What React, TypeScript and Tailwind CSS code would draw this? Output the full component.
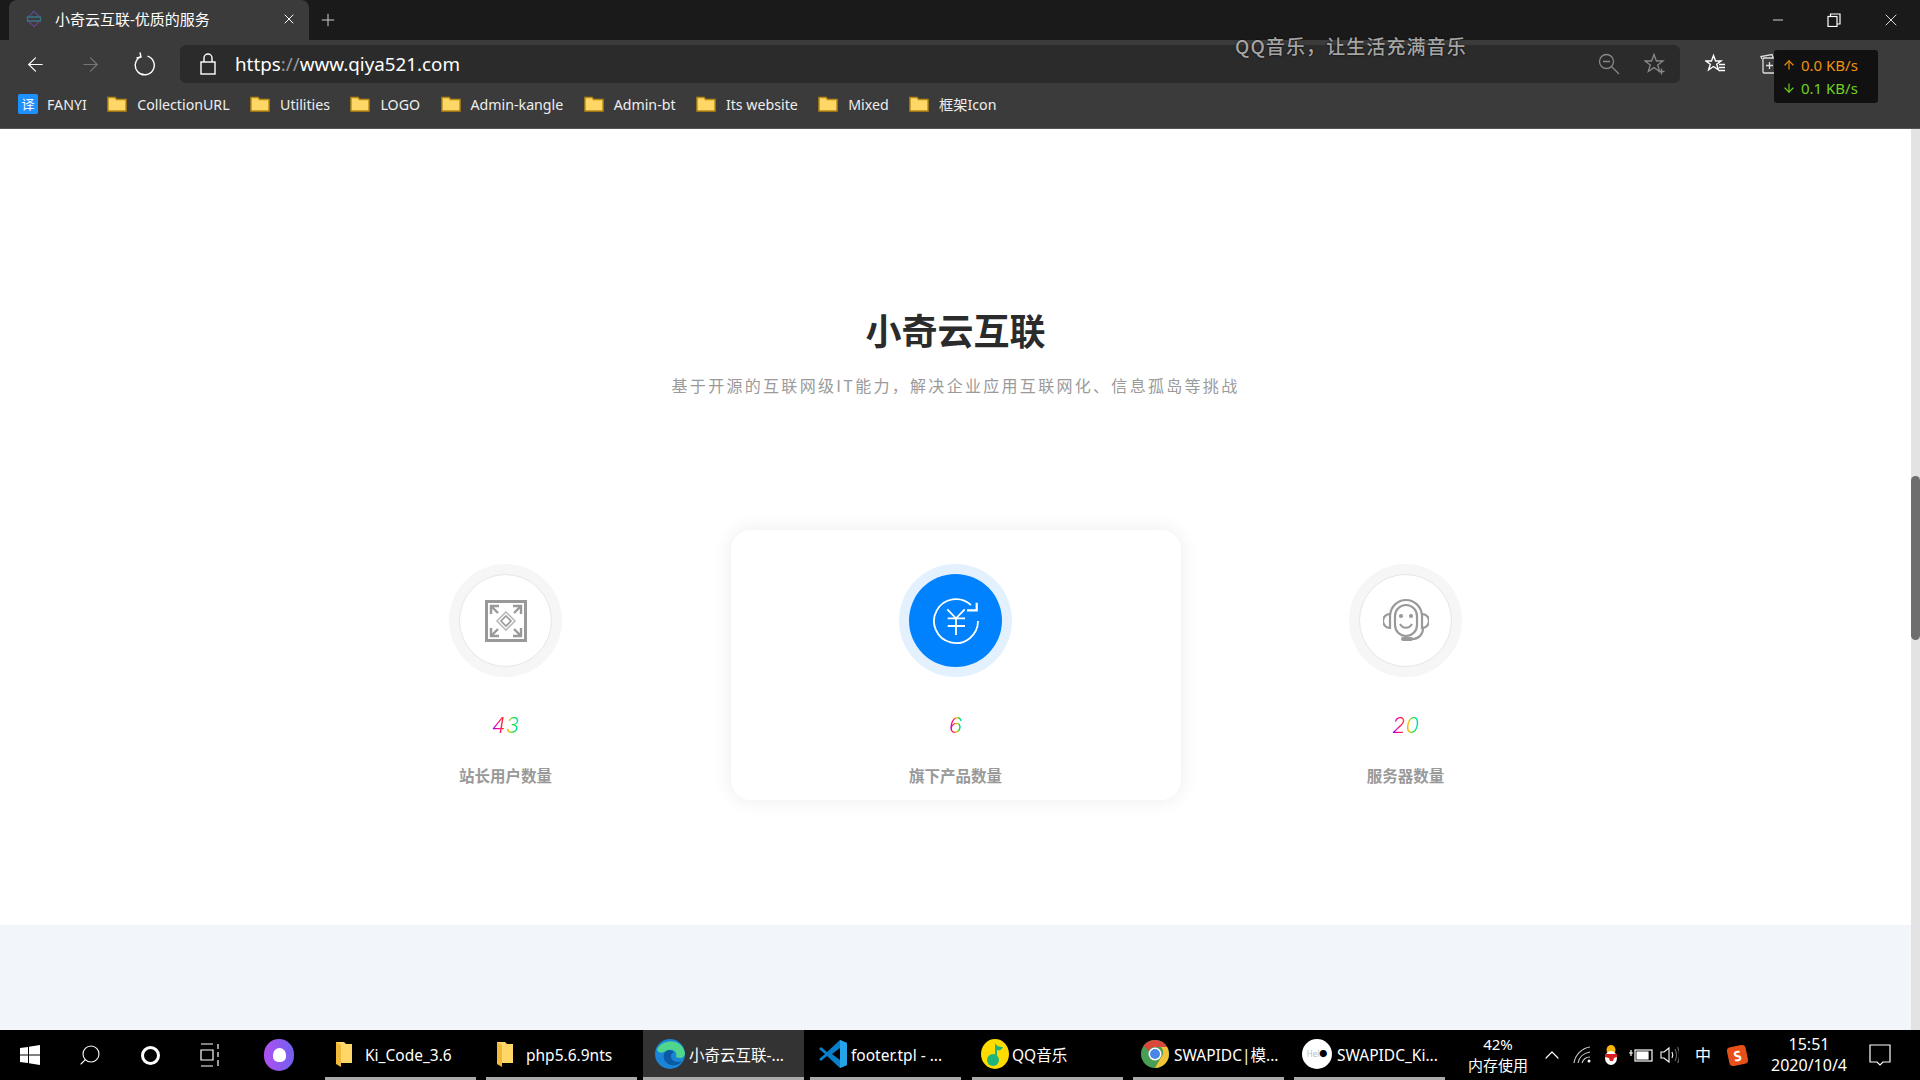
import { ArrowLeft, ArrowRight, X, Plus, Minus, ChevronUp, Search, MoreHorizontal, ArrowUp, ArrowDown } from "lucide-react";

const sans = "font-['Noto_Sans','Noto_Sans_CJK_SC',sans-serif]";

const bookmarks = ["CollectionURL", "Utilities", "LOGO", "Admin-kangle", "Admin-bt", "Its website", "Mixed", "框架Icon"];

function Folder() {
  return (
    <svg width="20" height="16" viewBox="0 0 20 16">
      <path d="M1 1.5h7l1.5 2H19v11.5H1z" fill="#ffd766" stroke="#b98a12" strokeWidth="1.4" />
    </svg>
  );
}

function TabFavicon() {
  return (
    <svg width="18" height="18" viewBox="0 0 18 18" fill="none" strokeWidth="1.3">
      <path d="M9 1.5 15 7H3z" stroke="#5a4a8a" />
      <path d="M9 16.5 3 11h12z" stroke="#6a3f86" />
      <rect x="2.5" y="7" width="13" height="4" stroke="#2e7a78" />
    </svg>
  );
}

function RefreshIcon() {
  return (
    <svg width="22" height="24" viewBox="0 0 22 24" fill="none" stroke="#fff" strokeWidth="1.4">
      <path d="M13.5 4.2A9.5 9.5 0 1 1 6.5 4.8" />
      <path d="M6 0.5 7 5 2.5 6" />
    </svg>
  );
}

function LockIcon() {
  return (
    <svg width="16" height="22" viewBox="0 0 16 22" fill="none" stroke="#fff" strokeWidth="1.4">
      <rect x="1" y="9" width="14" height="12" />
      <path d="M4 9V5a4 4 0 0 1 8 0v4" />
    </svg>
  );
}

function ZoomOutIcon() {
  return (
    <svg width="22" height="22" viewBox="0 0 22 22" fill="none" stroke="#888" strokeWidth="1.3">
      <circle cx="8.5" cy="8.5" r="7" />
      <path d="M13.5 13.5 21 21M5 8.5h7" />
    </svg>
  );
}

function StarPlusIcon() {
  return (
    <svg width="22" height="22" viewBox="0 0 22 22" fill="none" stroke="#888" strokeWidth="1.3">
      <path d="M10 1.5 12.4 8H19l-5.3 4 2 6.5L10 14.6l-5.7 3.9 2-6.5L1 8h6.6z" />
      <path d="M17.5 15.5v6M14.5 18.5h6" />
    </svg>
  );
}

function StarList() {
  return (
    <svg width="22" height="22" viewBox="0 0 22 22" fill="none" stroke="#fff" strokeWidth="1.4">
      <path d="M8.5 2.5 10.6 8H16l-4.3 3.2 1.7 5.6-4.9-3.3-4.9 3.3 1.7-5.6L1 8h5.5z" />
      <path d="M14 11.5h6M14 14.5h6M14 17.5h6" />
    </svg>
  );
}

function Collections() {
  return (
    <svg width="20" height="22" viewBox="0 0 20 22" fill="none" stroke="#ddd" strokeWidth="1.3">
      <path d="M3 6 2 3.5 13 1.5l1 3" />
      <rect x="4" y="5" width="13" height="15" rx="1" />
      <path d="M10.5 9v7M7 12.5h7" />
    </svg>
  );
}

function TitleBar() {
  return (
    <div className="flex h-10 items-end bg-[#1a1a1a] pl-[9px]">
      <div className="flex h-10 w-[300px] items-center rounded-t-lg bg-[#3b3b3b] pb-[2px] pl-4 pr-[12px]">
        <TabFavicon />
        <span className="ml-[12px] flex-1 text-[15px] text-white">小奇云互联-优质的服务</span>
        <X size={16} strokeWidth={1.5} className="text-white" />
      </div>
      <Plus size={20} strokeWidth={1.2} className="mb-[10px] ml-[9px] text-[#ccc]" />
      <div className="ml-auto flex h-full items-center">
        <div className="flex w-[56px] justify-center"><Minus size={16} strokeWidth={1.2} className="text-white" /></div>
        <div className="flex w-[56px] justify-center">
          <svg width="14" height="14" viewBox="0 0 14 14" fill="none" stroke="#fff" strokeWidth="1.2">
            <rect x="1" y="3.5" width="9" height="10" />
            <path d="M3.5 3.5V1H13v10h-3" />
          </svg>
        </div>
        <div className="flex w-[58px] justify-center"><X size={20} strokeWidth={1} className="text-white" /></div>
      </div>
    </div>
  );
}

function Toolbar() {
  return (
    <div className="flex h-[45px] items-center bg-[#3b3b3b] pb-[2px] pt-[5px]">
      <div className="flex w-[180px] items-center pl-[24px]">
        <ArrowLeft size={23} strokeWidth={1.2} className="text-white" />
        <ArrowRight size={23} strokeWidth={1.2} className="ml-[32px] text-[#777]" />
        <div className="ml-[32px]"><RefreshIcon /></div>
      </div>
      <div className="flex h-[38px] w-[1500px] items-center rounded-md bg-[#2b2b2b] pl-[20px] pr-[14px]">
        <LockIcon />
        <span className="ml-[19px] flex-1 text-[18.8px] text-white">
          https<span className="text-[#999]">://</span>www.qiya521.com
        </span>
        <ZoomOutIcon />
        <div className="ml-[24px]"><StarPlusIcon /></div>
      </div>
      <div className="ml-[25px] flex items-center">
        <StarList />
        <div className="ml-[32px]"><Collections /></div>
        {/* profile picture, mostly hidden by the speed widget */}
        <div className="ml-[25px] h-[24px] w-[24px] rounded-full bg-[#5c5346]" />
        <MoreHorizontal size={18} className="ml-[11px] text-[#ddd]" />
      </div>
    </div>
  );
}

function BookmarksBar() {
  return (
    <div className="flex h-[44px] items-center gap-[20.4px] border-b border-b-[#555] bg-[#3b3b3b] pb-[4px] pl-[18px] text-[14.2px] text-[#eee]">
      <div className="flex items-center gap-[9px]">
        <span className="flex h-[20px] w-[20px] items-center justify-center rounded-[2px] bg-[#1e90ff] text-[13px] text-white">译</span>
        FANYI
      </div>
      {bookmarks.map((name) => (
        <div key={name} className="flex items-center gap-[10px]">
          <Folder />
          {name}
        </div>
      ))}
    </div>
  );
}

function ExpandIcon() {
  return (
    <svg width="42" height="42" viewBox="0 0 42 42" fill="none" stroke="#999">
      <rect x="1.5" y="1.5" width="39" height="39" strokeWidth="3" />
      <path d="M6 14V6h8M6 6l7 7M28 6h8v8M36 6l-7 7M6 28v8h8M6 36l7-7M36 28v8h-8M36 36l-7-7" strokeWidth="2.4" />
      <path d="M21 12l9 9-9 9-9-9z" strokeWidth="1.6" stroke="#bbb" />
      <path d="M21 16l5 5-5 5-5-5z" strokeWidth="1.6" />
    </svg>
  );
}

function YuanIcon() {
  return (
    <svg width="48" height="48" viewBox="0 0 48 48" fill="none" stroke="#fff" strokeWidth="1.8">
      <path d="M46 24a22 22 0 1 1-7-16" />
      <path d="M44.7 5.7v7.6H35" strokeWidth="2.2" />
      <path d="M15.3 12.3 24 21.3l8.7-9M15.7 21.3H33M15.7 29H33M24 21v17" />
    </svg>
  );
}

function AgentIcon() {
  return (
    <svg width="46" height="46" viewBox="0 0 46 46" fill="none" stroke="#999" strokeWidth="2.2">
      <path d="M7 17C8 8 15 2 23 2s15 6 16 15" />
      <rect x="12" y="7" width="22" height="31" rx="11" />
      <path d="M7 16a7 7 0 0 0 0 14zM39 16a7 7 0 0 1 0 14z" />
      <path d="M17 26c3 5 9 5 12 0" />
      <path d="M40 30c0 7-5 11-11 11" />
      <path d="M20 41h8" strokeWidth="4" strokeLinecap="round" />
      <circle cx="18" cy="18" r="1" fill="#999" />
      <circle cx="28" cy="18" r="1" fill="#999" />
    </svg>
  );
}

function Stat({ icon, value, label, active }: { icon: React.ReactNode; value: string; label: string; active?: boolean }) {
  return (
    <div className={active ? "flex h-[270px] flex-col items-center rounded-[20px] bg-white pt-[34px] shadow-[0_0_20px_rgba(0,0,0,0.08)]" : "flex h-[270px] flex-col items-center pt-[34px]"}>
      <div className={active ? "flex h-[113px] w-[113px] items-center justify-center rounded-full bg-[#e3f1ff]" : "flex h-[113px] w-[113px] items-center justify-center rounded-full bg-[#f6f6f6]"}>
        <div className={active ? "flex h-[93px] w-[93px] items-center justify-center rounded-full bg-[#0082ff]" : "flex h-[93px] w-[93px] items-center justify-center rounded-full border border-[#e6e6e6] bg-white"}>
          {icon}
        </div>
      </div>
      <div className="mt-[36px] h-[24px] bg-[linear-gradient(90deg,#7000ff,#ff00a0,#ff3030,#ffc000,#00e040,#00e0e0)] bg-clip-text font-['Inter',sans-serif] text-[22px] font-light italic leading-[24px] text-transparent">
        {value}
      </div>
      <div className="mt-[27px] font-['Noto_Sans_CJK_SC',sans-serif] text-[15.5px] font-bold leading-[22px] text-[#999]">{label}</div>
    </div>
  );
}

function Page() {
  return (
    <div className="flex min-w-0 flex-1 flex-col">
      <section className="flex h-[796px] flex-col items-center bg-white pt-[175px]">
        <h1 className="font-['Noto_Sans_CJK_SC',serif] text-[36px] font-bold leading-[50px] text-[#2b2b2b]">小奇云互联</h1>
        <p className="mt-[20px] font-['Noto_Sans_CJK_SC',sans-serif] text-[16px] leading-[22px] tracking-[2.3px] text-[#9a9a9a]">
          基于开源的互联网级IT能力，解决企业应用互联网化、信息孤岛等挑战
        </p>
        <div className="mt-[134px] grid w-[1350px] grid-cols-3">
          <Stat icon={<ExpandIcon />} value="43" label="站长用户数量" />
          <Stat icon={<YuanIcon />} value="6" label="旗下产品数量" active />
          <Stat icon={<AgentIcon />} value="20" label="服务器数量" />
        </div>
      </section>
      <div className="flex-1 bg-[#f2f6fa]" />
    </div>
  );
}

function Scrollbar() {
  return (
    <div className="h-full w-[9px] bg-[#e3e3e3] pt-[347px]">
      <div className="h-[164px] rounded-full bg-[#6e6e6e]" />
    </div>
  );
}

function TaskItem({ icon, label, active, gap }: { icon: React.ReactNode; label: string; active?: boolean; gap: string }) {
  return (
    <div className={active ? `flex h-full w-[161px] items-center border-b-[3px] border-b-[#aaa] bg-[#333] pl-[11px] ${gap}` : `flex h-full w-[151px] items-center border-b-[3px] border-b-[#aaa] pl-[8px] ${gap}`}>
      {icon}
      <span className="whitespace-nowrap pt-[5px] text-[15.5px] text-white">{label}</span>
    </div>
  );
}

function TaskFolder() {
  return (
    <svg width="18" height="30" viewBox="0 0 18 30" className="ml-[2px]">
      <path d="M1 3h8l2 2h6v19H1z" fill="#ffd766" />
      <path d="M1 3l5 3v22l-5-3z" fill="#f0b93a" />
    </svg>
  );
}

function EdgeIcon() {
  return (
    <svg width="32" height="32" viewBox="0 0 32 32">
      <circle cx="16" cy="16" r="15" fill="#1a85d6" />
      <path d="M3 12C6 2 27 -2 31 15c0 5-5 6-9 4 2-6-5-9-10-6-4 2-6 3-9-1z" fill="#4fd68c" />
      <path d="M12 13c-4 4-3 12 5 14 5 1 9-1 11-4-4 2-11 1-11-5 0-2 1-3 3-4-3-2-6-2-8-1z" fill="#0c59a4" />
    </svg>
  );
}

function VsCodeIcon() {
  return (
    <svg width="30" height="30" viewBox="0 0 30 30">
      <path d="M22 1l7 3v22l-7 3L9 17l-6 5-2-2 6-5-6-5 2-2 6 5z" fill="#0a7fc9" />
      <path d="M22 1l7 3v22l-7 3z" fill="#27a3e8" />
      <path d="M22 9v12l-8-6z" fill="#000" />
    </svg>
  );
}

function QQMusicIcon() {
  return (
    <svg width="30" height="30" viewBox="0 0 30 30">
      <ellipse cx="15" cy="15" rx="14" ry="15" fill="#ffdc00" />
      <circle cx="13" cy="21" r="6" fill="#1fb57a" />
      <path d="M15 21V4c2 4 6 4 8 4-1 3-4 4-6 3v10z" fill="#1fb57a" />
    </svg>
  );
}

function ChromeIcon() {
  return (
    <svg width="28" height="28" viewBox="0 0 28 28">
      <circle cx="14" cy="14" r="14" fill="#4a9d54" />
      <path d="M14 0a14 14 0 0 1 12.1 7H14a7 7 0 0 0-6.3 4L2.6 5.6A14 14 0 0 1 14 0z" fill="#d8483b" />
      <path d="M26.1 7A14 14 0 0 1 14 28l5.9-10.5a7 7 0 0 0 0-10.5z" fill="#f2c438" />
      <circle cx="14" cy="14" r="6.5" fill="#fff" />
      <circle cx="14" cy="14" r="5" fill="#4a86e8" />
    </svg>
  );
}

function HelloIcon() {
  return (
    <div className="flex h-[30px] w-[30px] items-center justify-center rounded-full bg-white text-[8px] text-[#bbb]">
      Hel<span className="text-black">●</span>
    </div>
  );
}

function Taskbar() {
  return (
    <div className={`flex h-[50px] items-center bg-black text-white ${sans}`}>
      <div className="flex h-full w-[325px] items-center">
        <div className="flex w-[60px] justify-center">
          <svg width="20" height="20" viewBox="0 0 20 20" fill="#fff">
            <path d="M0 3l8-1v7.5H0zM9 1.8 20 0v9.5H9zM0 10.5h8V18l-8-1zM9 10.5h11V20L9 18.2z" />
          </svg>
        </div>
        <div className="flex w-[60px] justify-center"><Search size={24} strokeWidth={1.1} className="-scale-x-100" /></div>
        <div className="flex w-[60px] justify-center"><div className="h-[19px] w-[19px] rounded-full border-[3px] border-white" /></div>
        <div className="flex w-[60px] justify-center">
          <svg width="21" height="24" viewBox="0 0 21 24" fill="none" stroke="#fff" strokeWidth="1.2">
            <path d="M1 1h12M1 23h12M1 7h12v10H1zM18 1v5M18 9v5M18 17v6" />
          </svg>
        </div>
        <div className="ml-[24px] flex h-[32px] w-[30px] items-center justify-center rounded-full bg-[linear-gradient(90deg,#b050f0,#7060f0)]">
          <div className="h-[14px] w-[13px] rounded-[50%_50%_40%_40%] bg-white" />
        </div>
      </div>
      <div className="flex h-full gap-[10px]">
        <TaskItem icon={<TaskFolder />} label="Ki_Code_3.6" gap="gap-[12px]" />
        <TaskItem icon={<TaskFolder />} label="php5.6.9nts" gap="gap-[12px]" />
      </div>
      <div className="ml-[6px] flex h-full gap-[6px]">
        <TaskItem icon={<EdgeIcon />} label="小奇云互联-..." gap="gap-[3px]" active />
        <TaskItem icon={<VsCodeIcon />} label="footer.tpl - ..." gap="gap-[3px]" />
        <div className="ml-[5px] flex h-full gap-[10px]">
          <TaskItem icon={<QQMusicIcon />} label="QQ音乐" gap="gap-[2px]" />
          <TaskItem icon={<ChromeIcon />} label="SWAPIDC|模..." gap="gap-[5px]" />
          <TaskItem icon={<HelloIcon />} label="SWAPIDC_Ki..." gap="gap-[5px]" />
        </div>
      </div>
      <div className="ml-[11px] w-[84px] text-center text-[15px] leading-[21px]">
        <div>42%</div>
        <div>内存使用</div>
      </div>
      <ChevronUp size={24} strokeWidth={1.2} />
      <svg width="20" height="18" viewBox="0 0 20 18" fill="none" stroke="#ccc" strokeWidth="1.1" className="ml-[9px]">
        <path d="M1 17C2 9 9 2 17 1M5 17c1-5 5-10 12-11M9 17c1-3 3-6 8-6" />
        <circle cx="16" cy="15" r="1.5" fill="#fff" stroke="none" />
      </svg>
      <svg width="16" height="22" viewBox="0 0 16 22" className="ml-[10px]">
        <ellipse cx="8" cy="6" rx="4.5" ry="5" fill="#f5b50a" />
        <ellipse cx="8" cy="14" rx="6" ry="7" fill="#fff" />
        <path d="M2 10h12v3l-3 1-1 3H7l-1-3-4-1z" fill="#d81e1e" />
      </svg>
      <svg width="24" height="16" viewBox="0 0 24 16" fill="none" stroke="#fff" strokeWidth="1.2" className="ml-[10px]">
        <rect x="6" y="3" width="17" height="11" />
        <rect x="8" y="5" width="11" height="7" fill="#fff" />
        <path d="M0 6h4M2 3v6" />
      </svg>
      <svg width="20" height="20" viewBox="0 0 20 20" fill="none" stroke="#fff" strokeWidth="1.1" className="ml-[6px]">
        <path d="M2 7h3l5-4v14l-5-4H2z" />
        <path d="M13 7c1 2 1 4 0 6" />
        <path d="M16 4c2 4 2 8 0 12M18.500 2c2.500 5 2.500 11 0 16" stroke="#666" />
      </svg>
      <span className="ml-[16px] text-[16px]">中</span>
      <div className="ml-[17px] flex h-[19px] w-[19px] rotate-[-12deg] items-center justify-center rounded-[4px] bg-[#e8501a] text-[14px] font-bold leading-none">S</div>
      <div className="ml-[17px] w-[90px] text-center text-[16px] leading-[21px]">
        <div>15:51</div>
        <div>2020/10/4</div>
      </div>
      <svg width="22" height="24" viewBox="0 0 22 24" fill="none" stroke="#fff" strokeWidth="1.2" className="ml-[15px]">
        <path d="M1 2h20v17h-7l-3 3-3-3H1z" />
      </svg>
    </div>
  );
}

export default function App() {
  return (
    <div className={`relative flex h-[1080px] w-[1920px] flex-col overflow-hidden ${sans}`}>
      <TitleBar />
      <Toolbar />
      <BookmarksBar />
      <div className="flex h-[901px] min-h-0">
        <Page />
        <Scrollbar />
      </div>
      <Taskbar />
      {/* desktop lyric floats above the browser */}
      <div className="absolute left-[1235px] top-[32px] font-['Noto_Sans_CJK_SC',serif] text-[19px] font-medium tracking-[1.1px] text-[#a5a5a5] [text-shadow:0_0_2px_#000]">
        QQ音乐，让生活充满音乐
      </div>
      {/* net speed widget */}
      <div className="absolute left-[1774px] top-[50px] flex h-[53px] w-[104px] flex-col justify-center gap-[2px] rounded-[3px] bg-[#111] pl-[8px] text-[15px] leading-[21px]">
        <div className="flex items-center gap-[5px] text-[#f09010]"><ArrowUp size={14} />0.0 KB/s</div>
        <div className="flex items-center gap-[5px] text-[#70d020]"><ArrowDown size={14} />0.1 KB/s</div>
      </div>
    </div>
  );
}
